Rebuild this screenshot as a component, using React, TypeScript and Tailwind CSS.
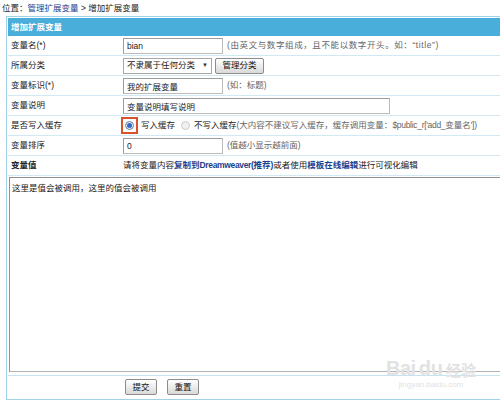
import React from 'react';

interface RowProps {
  label: string;
  bold?: boolean;
  children: React.ReactNode;
}

const Row: React.FC<RowProps> = ({ label, bold, children }) => (
  <div className="flex h-[20px] border-b border-[#d0e9f4]">
    <div className={`w-[113px] pl-[3px] flex items-center text-[#222] ${bold ? 'font-bold' : ''}`}>{label}</div>
    <div className="flex-1 flex items-center pl-[2px] whitespace-nowrap">{children}</div>
  </div>
);

const TextBox: React.FC<{ value: string; width: string }> = ({ value, width }) => (
  <input
    readOnly
    value={value}
    className={`${width} h-[16px] border border-[#bcbcbc] border-t-[#9c9c9c] border-l-[#9c9c9c] px-[3px] text-[#222] outline-none bg-white`}
  />
);

const GrayButton: React.FC<{ label: string; className?: string }> = ({ label, className = '' }) => (
  <button
    className={`h-[16px] border border-[#8c8c8c] rounded-[2px] bg-gradient-to-b from-white to-[#d9d9d9] text-[#111] leading-none ${className}`}
  >
    {label}
  </button>
);

const Radio: React.FC<{ checked?: boolean }> = ({ checked }) => (
  <span
    className={`w-[9px] h-[9px] rounded-full border flex items-center justify-center ${
      checked ? 'border-[#6d7f95] bg-[#e8eef6]' : 'border-[#c9c9c9] bg-[#f1f1f1]'
    }`}
  >
    {checked && <span className="w-[5px] h-[5px] rounded-full bg-[#2f68c8]" />}
  </span>
);

export default function App() {
  return (
    <div className="relative w-[500px] h-[413px] overflow-hidden bg-white text-[8.5px] text-[#222] font-['Liberation_Sans','Noto_Sans_CJK_SC',sans-serif]">
      {/* breadcrumb */}
      <div className="h-[16px] pl-[2px] flex items-center">
        位置：<span className="text-[#1d3f8f]">管理扩展变量</span>&nbsp;&gt;&nbsp;增加扩展变量
      </div>

      <div className="ml-[6px] w-[600px] border border-[#9fd2e6] p-px">
        <div className="h-[18px] bg-[#4aaedb] text-white font-bold pl-[3px] flex items-center">增加扩展变量</div>

        <Row label="变量名(*)">
          <TextBox value="bian" width="w-[100px]" />
          <span className="ml-[4px] text-[#666] tracking-[0.6px]">(由英文与数字组成，且不能以数字开头。如：“title”)</span>
        </Row>

        <Row label="所属分类">
          <div className="w-[89px] h-[16px] border border-[#a7a7a7] flex items-center justify-between pl-[3px] pr-[3px] bg-white">
            <span>不隶属于任何分类</span>
            <span className="text-[6px] text-[#333]">▼</span>
          </div>
          <GrayButton label="管理分类" className="ml-[3px] w-[49px]" />
        </Row>

        <Row label="变量标识(*)">
          <TextBox value="我的扩展变量" width="w-[100px]" />
          <span className="ml-[4px] text-[#666]">(如：标题)</span>
        </Row>

        <Row label="变量说明">
          <TextBox value="变量说明填写说明" width="w-[267px]" />
        </Row>

        <Row label="是否写入缓存">
          <span className="relative w-[17px] h-[17px] -ml-[2px] border-2 border-[#d8532a] flex items-center justify-center">
            <Radio checked />
          </span>
          <span className="ml-[3px]">写入缓存</span>
          <span className="ml-[6px]">
            <Radio />
          </span>
          <span className="ml-[4px]">不写入缓存</span>
          <span className="text-[#666]">
            (大内容不建议写入缓存，缓存调用变量：<span className="tracking-[-0.3px]">$public_r['add_</span>变量名<span className="tracking-[-0.3px]">'])</span>
          </span>
        </Row>

        <Row label="变量排序">
          <TextBox value="0" width="w-[100px]" />
          <span className="ml-[4px] text-[#666]">(值越小显示越前面)</span>
        </Row>

        <Row label="变量值" bold>
          <span>请将变量内容</span>
          <span className="font-bold text-[#1d3f8f]">
            复制到<span className="tracking-[-0.35px]">Dreamweaver(</span>推荐)
          </span>
          <span>或者使用</span>
          <span className="font-bold text-[#1d3f8f]">模板在线编辑</span>
          <span>进行可视化编辑</span>
        </Row>

        <div className="pl-[1px] pt-px pb-[3px] border-b border-[#c6e4f0]">
          <textarea
            readOnly
            defaultValue="这里是值会被调用，这里的值会被调用"
            className="block w-full h-[195px] border border-[#b3b3b3] border-t-[#8f8f8f] border-l-[#8f8f8f] px-[2px] py-[4px] resize-none outline-none text-[#222] bg-white"
          />
        </div>

        <div className="h-[22px] flex items-center pl-[117px] gap-[10px]">
          <GrayButton label="提交" className="w-[32px]" />
          <GrayButton label="重置" className="w-[32px]" />
        </div>
      </div>

      {/* watermark */}
      <div className="absolute left-[386px] top-[358px] flex flex-col items-center text-[#e2e2e2] pointer-events-none">
        <div className="flex items-end gap-[3px]">
          <span className="text-[20px] font-bold tracking-tight leading-none">Bai</span>
          <span className="text-[20px] font-bold leading-none">du</span>
          <span className="text-[15px] font-bold leading-none">经验</span>
        </div>
        <span className="text-[8px] leading-none mt-[3px]">jingyan.baidu.com</span>
      </div>
    </div>
  );
}
